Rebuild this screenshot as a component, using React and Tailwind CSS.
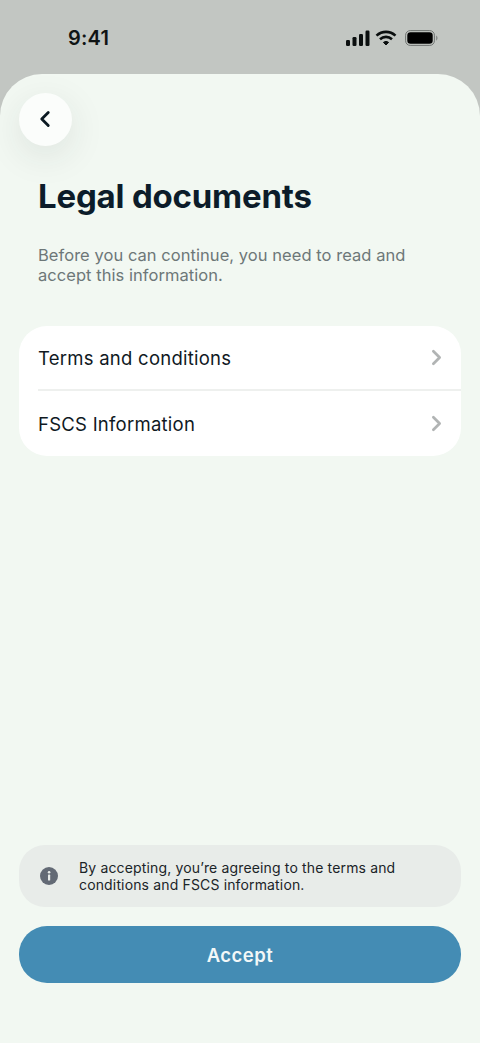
import React from 'react';
import { ChevronLeft, ChevronRight } from 'lucide-react';

const documents = ['Terms and conditions', 'FSCS Information'];

const StatusIcons = () => (
    <div className="flex items-center gap-[5px]">
        <svg width="24" height="16" viewBox="0 0 24 16" fill="#0b0f0f">
            <rect x="0" y="10" width="4" height="6" rx="1.2" />
            <rect x="6.5" y="7" width="4" height="9" rx="1.2" />
            <rect x="13" y="4" width="4" height="12" rx="1.2" />
            <rect x="19.5" y="0.5" width="4" height="15.5" rx="1.2" />
        </svg>
        <svg width="22" height="16" viewBox="0 0 22 16" fill="none" stroke="#0b0f0f" strokeWidth="2.6" className="mr-[3px]">
            <path d="M1.5 5.6C7 .6 15 .6 20.5 5.6" />
            <path d="M5 9.2c3.5-3.1 8.5-3.1 12 0" />
            <path d="M8.4 12.4c1.6-1.3 3.6-1.3 5.2 0L11 15z" fill="#0b0f0f" strokeWidth="1" />
        </svg>
        <svg width="33" height="16" viewBox="0 0 33 16" fill="none">
            <rect x="0.6" y="0.6" width="28.8" height="14.8" rx="4.6" stroke="#6f7371" strokeWidth="1" />
            <rect x="2.3" y="2.3" width="25.4" height="11.4" rx="3.2" fill="#000" />
            <path d="M31 5.4c1 .4 1.6 1.4 1.6 2.6s-.6 2.2-1.6 2.6z" fill="#8a8e8c" />
        </svg>
    </div>
);

export default function App() {
    return (
        <div className="w-[480px] h-[1043px] flex flex-col bg-[#c2c6c2] overflow-hidden font-['Inter',sans-serif]">
            {/* Status bar */}
            <div className="h-[74px] shrink-0 flex items-center justify-between pl-[68px] pr-[42px] pt-[2px]">
                <span className="text-[20px] font-semibold text-[#101414] tracking-[0.2px]">9:41</span>
                <StatusIcons />
            </div>

            {/* Sheet */}
            <div className="flex-1 flex flex-col bg-[#f2f8f2] rounded-t-[42px] px-[19px] pt-[19px] pb-[60px]">
                <button className="w-[53px] h-[53px] shrink-0 rounded-full bg-[#fbfdfb] flex items-center justify-center pr-[2px] pb-[1px] shadow-[0_10px_36px_rgba(40,50,50,0.1)]">
                    <ChevronLeft className="w-[26px] h-[26px] text-[#0b1a22]" strokeWidth={2.6} />
                </button>

                <h1 className="mt-[30px] ml-[19px] text-[33px] leading-[40px] font-bold text-[#0c1c2a] tracking-[-0.2px]">Legal documents</h1>
                <p className="mt-[29px] mx-[19px] text-[16.5px] leading-[20px] text-[#6d7778] tracking-[0.05px]">
                    Before you can continue, you need to read and accept this information.
                </p>

                <div className="mt-[41px] bg-white rounded-[28px] flex flex-col">
                    {documents.map((doc, i) => (
                        <div
                            key={doc}
                            className={`ml-[19px] pr-[12px] h-[65px] flex items-center justify-between ${i === 0 ? 'border-b-2 border-[#eef0ee]' : ''}`}
                        >
                            <span className="text-[18.5px] text-[#10191f] tracking-[0.25px] pt-[2px]">{doc}</span>
                            <ChevronRight className="w-[25px] h-[25px] text-[#b1b4b4]" strokeWidth={2.6} />
                        </div>
                    ))}
                </div>

                <div className="mt-auto h-[62px] bg-[#e8ece9] rounded-[26px] flex items-center pl-[20px] pr-[20px]">
                    <svg width="20" height="20" viewBox="0 0 20 20" className="shrink-0">
                        <circle cx="10" cy="10" r="9" fill="#636a75" />
                        <rect x="9" y="8.6" width="2.2" height="6" rx="0.6" fill="#e8ece9" />
                        <circle cx="10.1" cy="6.2" r="1.3" fill="#e8ece9" />
                    </svg>
                    <p className="ml-[20px] text-[14px] leading-[17px] text-[#1b2428] tracking-[0.15px]">
                        By accepting, you’re agreeing to the terms and conditions and FSCS information.
                    </p>
                </div>

                <button className="mt-[19px] h-[57px] shrink-0 rounded-[28px] bg-[#448cb4] text-[#f2f8f8] text-[18.5px] font-semibold tracking-[0.5px] pt-[2px]">
                    Accept
                </button>
            </div>
        </div>
    );
}
